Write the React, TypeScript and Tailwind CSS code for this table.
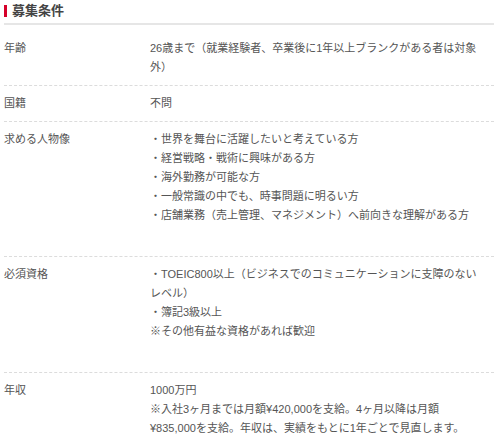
import React from "react"

type Row = {
	label: string
	lines: string[]
	extra?: boolean
}

const rows: Row[] = [
	{
		label: "年齢",
		lines: ["26歳まで（就業経験者、卒業後に1年以上ブランクがある者は対象外）"],
	},
	{ label: "国籍", lines: ["不問"] },
	{
		label: "求める人物像",
		lines: [
			"・世界を舞台に活躍したいと考えている方",
			"・経営戦略・戦術に興味がある方",
			"・海外勤務が可能な方",
			"・一般常識の中でも、時事問題に明るい方",
			"・店舗業務（売上管理、マネジメント）へ前向きな理解がある方",
		],
		extra: true,
	},
	{
		label: "必須資格",
		lines: [
			"・TOEIC800以上（ビジネスでのコミュニケーションに支障のないレベル）",
			"・簿記3級以上",
			"※その他有益な資格があれば歓迎",
		],
		extra: true,
	},
	{
		label: "年収",
		lines: [
			"1000万円",
			"※入社3ヶ月までは月額¥420,000を支給。4ヶ月以降は月額¥835,000を支給。年収は、実績をもとに1年ごとで見直します。",
		],
	},
]

export default function App() {
	return (
		<div
			className="w-[500px] h-[441px] overflow-hidden bg-white pl-[4px] pr-[6px]"
			style={{ fontFamily: '"Liberation Sans", "Noto Sans CJK JP", sans-serif' }}
		>
			<div className="flex items-center pt-[3px] pb-[5px] border-b-2 border-[#e6e6e6]">
				<span className="w-[3px] h-[12px] bg-[#d6002a] mr-[5px]" />
				<h2 className="text-[13px] leading-[15px] font-bold text-[#444]">募集条件</h2>
			</div>

			<dl className="mt-[6px]">
				{rows.map((row) => (
					<div
						key={row.label}
						className={`flex pt-[8px] border-b border-dashed border-[#dcdcdc] text-[11px] leading-[19px] text-[#555] ${
							row.extra ? "pb-[31px]" : "pb-[8px]"
						}`}
					>
						<dt className="w-[146px] shrink-0">{row.label}</dt>
						<dd className="w-[332px]">
							{row.lines.map((line, i) => (
								<div key={i}>{line}</div>
							))}
						</dd>
					</div>
				))}
			</dl>
		</div>
	)
}
